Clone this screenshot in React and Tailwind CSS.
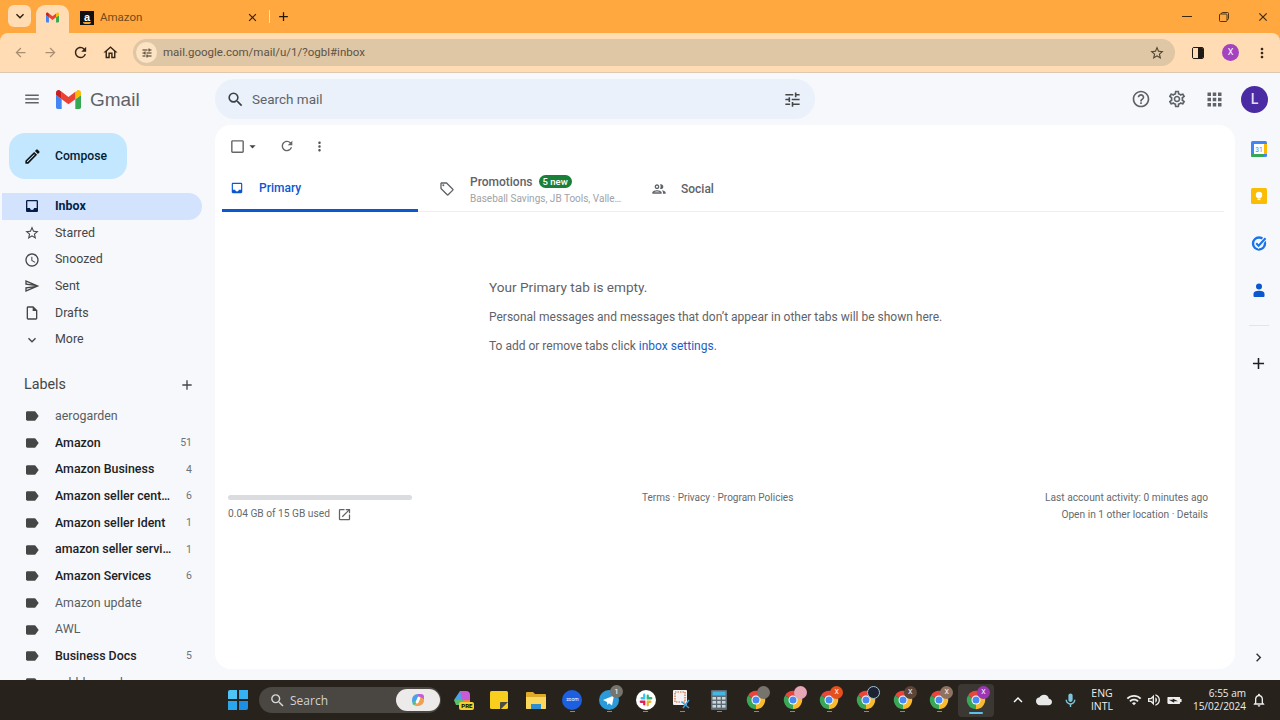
import React from 'react';
import {
  MdMenu, MdSearch, MdTune, MdHelpOutline, MdOutlineSettings, MdApps, MdOutlineEdit, MdInbox,
  MdStarBorder, MdAccessTime, MdOutlineSend, MdOutlineInsertDriveFile, MdExpandMore, MdAdd, MdLabel,
  MdCheckBoxOutlineBlank, MdArrowDropDown, MdRefresh, MdMoreVert, MdOutlineLocalOffer, MdOutlineGroup,
  MdOpenInNew, MdChevronRight, MdArrowBack, MdArrowForward, MdOutlineHome, MdClose, MdKeyboardArrowDown,
  MdKeyboardArrowUp, MdOutlineMic, MdWifi, MdOutlineNotifications, MdCloud, MdOutlineVolumeUp,
  MdBatteryChargingFull,
} from 'react-icons/md';

function GmailM({ className }) {
  return (
    <svg viewBox="0 0 24 24" className={className}>
      <path fill="#4285f4" d="M1.636 21h3.818v-9.273L0 7.636v11.727C0 20.268.732 21 1.636 21z" />
      <path fill="#34a853" d="M18.545 21h3.819c.904 0 1.636-.732 1.636-1.636V7.636l-5.455 4.091V21z" />
      <path fill="#fbbc04" d="M18.545 4.636v7.09L24 7.637V5.455c0-2.023-2.309-3.178-3.927-1.964l-1.528 1.145z" />
      <path fill="#ea4335" d="M5.455 11.727V4.636L12 9.545l6.545-4.909v7.09L12 16.636z" />
      <path fill="#c5221f" d="M0 5.455v2.181l5.455 4.091V4.636L3.927 3.491C2.309 2.278 0 3.432 0 5.455z" />
    </svg>
  );
}

function ChromeIcon({ badge, badgeText }) {
  return (
    <span className="relative block w-[20px] h-[20px]">
      <svg viewBox="0 0 24 24" className="w-[20px] h-[20px]">
        <path fill="#e8453c" d="M12 12 2.47 6.5A11 11 0 0 1 21.53 6.5Z" />
        <path fill="#f9bb2d" d="M12 12 21.53 6.5A11 11 0 0 1 12 23Z" />
        <path fill="#3aa757" d="M12 12 12 23A11 11 0 0 1 2.47 6.5Z" />
        <circle cx="12" cy="12" r="5.4" fill="#fff" />
        <circle cx="12" cy="12" r="4.2" fill="#4a8af4" />
      </svg>
      <span className={`absolute -top-[4px] -right-[4px] w-[13px] h-[13px] rounded-full flex items-center justify-center text-[7px] text-white font-['Roboto',sans-serif] ${badge}`}>{badgeText}</span>
    </span>
  );
}

function Dash({ active }) {
  return active ? (
    <span className="absolute bottom-[3px] left-[11px] w-[14px] h-[2px] rounded bg-[#5cc1ef]" />
  ) : (
    <span className="absolute bottom-[5px] left-[16px] w-[5px] h-[1px] bg-[#8b8985]" />
  );
}

function TaskSlot({ children, dash, active }) {
  return (
    <div className={`relative w-[36.7px] h-[33px] flex items-center justify-center rounded ${active ? 'bg-[#3b3834]' : ''}`}>
      {children}
      {dash && <Dash active={active} />}
    </div>
  );
}

const navItems = [
  { label: 'Inbox', Icon: MdInbox, active: true },
  { label: 'Starred', Icon: MdStarBorder },
  { label: 'Snoozed', Icon: MdAccessTime },
  { label: 'Sent', Icon: MdOutlineSend },
  { label: 'Drafts', Icon: MdOutlineInsertDriveFile },
  { label: 'More', Icon: MdExpandMore },
];

const labels = [
  ['aerogarden', '', false],
  ['Amazon', '51', true],
  ['Amazon Business', '4', true],
  ['Amazon seller central', '6', true],
  ['Amazon seller Ident', '1', true],
  ['amazon seller services', '1', true],
  ['Amazon Services', '6', true],
  ['Amazon update', '', false],
  ['AWL', '', false],
  ['Business Docs', '5', true],
  ['cobbler work', '', false],
];

const chromes = [
  ['bg-[#77736d]', '', false],
  ['bg-[#e5a6b5]', '', false],
  ['bg-[#e4501f]', 'X', false],
  ['bg-[#1b2233] border border-[#9fc2dc]', '', false],
  ['bg-[#5c4436]', 'X', false],
  ['bg-[#8d7363]', 'X', false],
  ['bg-[#9c36b5]', 'X', true],
];

export default function App() {
  return (
    <div className="w-[1280px] h-[720px] flex flex-col overflow-hidden bg-[#ffa83f] font-['Roboto',sans-serif]">
      {/* Tab strip */}
      <div className="h-[33px] shrink-0 flex items-end pl-2 text-[#4a3010]">
        <div className="w-[23px] h-[22px] mb-[6px] rounded-md bg-[#ffdcb4] flex items-center justify-center">
          <MdKeyboardArrowDown className="w-4 h-4 text-[#2b1c08]" />
        </div>
        <div className="relative ml-[5px] w-[33px] h-[28px] pb-[3px] rounded-t-[9px] bg-[#ffdcb4] flex items-center justify-center">
          <GmailM className="w-[13px] h-[13px]" />
        </div>
        <div className="ml-[11px] w-[179px] h-[28px] pb-[3px] flex items-center">
          <span className="relative w-[14px] h-[14px] bg-[#111] text-white text-[11px] leading-[12px] font-bold flex items-start justify-center font-['Liberation_Sans',sans-serif]">
            a
            <span className="absolute bottom-[1px] left-[3px] w-[8px] h-[2px] rounded-b-full bg-[#f5a623]" />
          </span>
          <span className="ml-[6px] text-[11.5px] text-[#6f4c1c] w-[142px]">Amazon</span>
          <MdClose className="ml-[4px] w-[13px] h-[13px] text-[#2b1c08]" />
        </div>
        <div className="ml-[10px] mb-[10px] w-px h-[13px] bg-[#ffdcb4]" />
        <MdAdd className="ml-[6px] mb-[9px] w-[15px] h-[15px] text-[#241704]" />
        <div className="ml-auto flex items-center h-[33px]">
          <span className="w-[10px] h-px bg-[#3b2a10]" />
          <svg viewBox="0 0 10 10" className="ml-[27px] w-[10px] h-[10px]" fill="none" stroke="#3b2a10" strokeWidth="0.9">
            <rect x="0.5" y="2" width="7.5" height="7.5" rx="1" />
            <path d="M2.5 2V1.5a1 1 0 0 1 1-1h5a1 1 0 0 1 1 1v5a1 1 0 0 1-1 1H8" />
          </svg>
          <MdClose className="ml-[27px] mr-[10px] w-[14px] h-[14px] text-[#3b2a10]" />
        </div>
      </div>

      {/* Toolbar */}
      <div className="h-[40px] shrink-0 rounded-t-lg bg-[#ffdcb4] border-b border-[#dcc9b3] flex items-center pl-[13px] pr-[10px]">
        <MdArrowBack className="w-[15px] h-[15px] text-[#a98f72]" />
        <MdArrowForward className="ml-[15px] w-[15px] h-[15px] text-[#a98f72]" />
        <MdRefresh className="ml-[14px] w-[17px] h-[17px] text-[#332516]" />
        <MdOutlineHome className="ml-[13px] w-[17px] h-[17px] text-[#332516]" />
        <div className="ml-[14px] flex-1 h-[27px] rounded-full bg-[#dfc6a4] flex items-center pl-[3px] pr-[10px]">
          <span className="w-[21px] h-[21px] rounded-full bg-[#fbe3c4] flex items-center justify-center">
            <MdTune className="w-[12px] h-[12px] text-[#3a2c1c]" />
          </span>
          <span className="ml-[6px] text-[11.5px] text-[#5d5346]">mail.google.com/mail/u/1/?ogbl#inbox</span>
          <MdStarBorder className="ml-auto w-[16px] h-[16px] text-[#4f4334]" />
        </div>
        <div className="ml-[17px] w-[12px] h-[12px] rounded-[2px] border-[1.5px] border-[#1f1a14] overflow-hidden flex">
          <span className="w-1/2 bg-[#ffdcb4]" />
          <span className="w-1/2 bg-[#1f1a14]" />
        </div>
        <div className="ml-[18px] w-[17px] h-[17px] rounded-full bg-[#a542c0] text-white text-[9px] flex items-center justify-center">X</div>
        <MdMoreVert className="ml-[15px] w-[16px] h-[16px] text-[#332516]" />
      </div>

      {/* Gmail */}
      <div className="flex-1 min-h-0 flex flex-col bg-[#f6f8fc]">
        <div className="h-[52px] shrink-0 flex items-center">
          <div className="w-[215px] shrink-0 flex items-center pl-[23px]">
            <MdMenu className="w-[18px] h-[18px] text-[#5f6368]" />
            <GmailM className="ml-[15px] w-[25px] h-[25px]" />
            <span className="ml-[9px] text-[19px] leading-none text-[#5f6368] font-['Liberation_Sans',sans-serif]">Gmail</span>
          </div>
          <div className="w-[600px] h-[40px] rounded-full bg-[#eaf1fb] flex items-center pl-[11px] pr-[13px]">
            <MdSearch className="w-[19px] h-[19px] text-[#3c4043]" />
            <span className="ml-[7px] mt-[1px] text-[13.5px] text-[#5f6368]">Search mail</span>
            <MdTune className="ml-auto w-[19px] h-[19px] text-[#444746]" />
          </div>
          <div className="ml-auto flex items-center pr-[12px]">
            <MdHelpOutline className="w-[20px] h-[20px] text-[#5f6368]" />
            <MdOutlineSettings className="ml-[16px] w-[20px] h-[20px] text-[#5f6368]" />
            <MdApps className="ml-[17px] w-[21px] h-[21px] text-[#5f6368]" />
            <div className="ml-[16px] w-[27px] h-[27px] rounded-full bg-[#4a2ba3] text-[#e6def5] text-[14px] font-medium flex items-center justify-center">L</div>
          </div>
        </div>

        <div className="flex-1 min-h-0 flex">
          {/* Sidebar */}
          <aside className="w-[215px] shrink-0 overflow-hidden pt-[8px]">
            <div className="ml-[9px] w-[118px] h-[46px] rounded-2xl bg-[#c2e7ff] flex items-center pl-[14px] text-[#001d35]">
              <MdOutlineEdit className="w-[19px] h-[19px] text-[#111]" />
              <span className="ml-[13px] text-[12.2px] font-medium">Compose</span>
            </div>
            <nav className="mt-[14px]">
              {navItems.map(({ label, Icon, active }) => (
                <div key={label} className={`ml-[2px] w-[200px] h-[26.67px] rounded-r-full flex items-center pl-[22px] text-[12.4px] ${active ? 'bg-[#d3e3fd] text-[#041e49] font-bold' : 'text-[#444746]'}`}>
                  <Icon className={`w-[16px] h-[16px] ${active ? 'text-[#041e49]' : 'text-[#444746]'}`} />
                  <span className="ml-[15px]">{label}</span>
                </div>
              ))}
            </nav>
            <div className="mt-[19px] h-[26px] flex items-center pl-[24px] pr-[20px] text-[#444746]">
              <span className="text-[14.3px]">Labels</span>
              <MdAdd className="ml-auto w-[16px] h-[16px]" />
            </div>
            <div className="mt-[5px]">
              {labels.map(([name, count, bold]) => (
                <div key={name} className={`h-[26.67px] flex items-center pl-[24px] pr-[23px] text-[12.4px] ${bold ? 'text-[#202124] font-medium' : 'text-[#5a5e62]'}`}>
                  <MdLabel className="w-[16px] h-[16px] text-[#444746] shrink-0" />
                  <span className="ml-[15px] w-[119px] truncate">{name}</span>
                  <span className="ml-auto text-[10.5px] font-normal text-[#6f7377]">{count}</span>
                </div>
              ))}
            </div>
          </aside>

          {/* Main panel */}
          <main className="w-[1020px] h-[544px] shrink-0 rounded-2xl bg-white flex flex-col px-[7px]">
            <div className="h-[42px] shrink-0 flex items-center pl-[7px] text-[#5f6368]">
              <MdCheckBoxOutlineBlank className="w-[17px] h-[17px] text-[#666]" />
              <MdArrowDropDown className="ml-[-1px] w-[15px] h-[15px] text-[#444]" />
              <MdRefresh className="ml-[19px] w-[16px] h-[16px] text-[#666]" />
              <MdMoreVert className="ml-[17px] w-[15px] h-[15px] text-[#555]" />
            </div>
            <div className="h-[45px] shrink-0 w-[1002px] flex border-b border-[#eeeeee]">
              <div className="w-[196px] h-[45px] border-b-[3px] border-[#0b57d0] flex items-center pl-[8px] text-[#0b57d0]">
                <MdInbox className="w-[14px] h-[14px]" />
                <span className="ml-[15px] text-[12px] font-medium">Primary</span>
              </div>
              <div className="w-[222px] flex items-center pl-[21px]">
                <MdOutlineLocalOffer className="w-[16px] h-[16px] text-[#5f6368]" />
                <div className="ml-[15px]">
                  <div className="flex items-center h-[16px]">
                    <span className="text-[12px] font-medium text-[#5f6368]">Promotions</span>
                    <span className="ml-[6px] h-[13px] px-[4px] rounded-full bg-[#188038] text-white text-[9.5px] font-medium leading-[13px]">5 new</span>
                  </div>
                  <div className="text-[10px] leading-[13px] mt-[2px] text-[#a0a3a7] whitespace-nowrap">Baseball Savings, JB Tools, Valle…</div>
                </div>
              </div>
              <div className="flex items-center pl-[11px] text-[#5f6368]">
                <MdOutlineGroup className="w-[16px] h-[16px]" />
                <span className="ml-[14px] text-[12px] font-medium">Social</span>
              </div>
            </div>
            <div className="pl-[267px] pt-[66px] text-[#5f6368]">
              <div className="text-[13.6px] leading-[18px]">Your Primary tab is empty.</div>
              <div className="mt-[14px] text-[12px] leading-[15px]">Personal messages and messages that don’t appear in other tabs will be shown here.</div>
              <div className="mt-[14px] text-[12px] leading-[15px]">To add or remove tabs click <span className="text-[#1a5fc8]">inbox settings</span><span>.</span></div>
            </div>
            <div className="mt-[141px] flex pl-[6px] pr-[20px] text-[10.2px] text-[#666a6e]">
              <div className="w-[184px]">
                <div className="h-[5px] rounded-full bg-[#dadce0]" />
                <div className="mt-[6px] flex items-center h-[16px]">
                  <span>0.04 GB of 15 GB used</span>
                  <MdOpenInNew className="ml-[7px] w-[15px] h-[15px] text-[#5f6368]" />
                </div>
              </div>
              <div className="ml-[230px] text-[10px] leading-[14px] -mt-[4px]">Terms · Privacy · Program Policies</div>
              <div className="ml-auto text-right leading-[16.5px] -mt-[5px]">
                <div>Last account activity: 0 minutes ago</div>
                <div>Open in 1 other location · Details</div>
              </div>
            </div>
          </main>

          {/* Side rail */}
          <div className="flex-1 flex flex-col items-center pl-[2px] pt-[16px] pb-[4px]">
            <svg viewBox="0 0 16 16" className="w-[16px] h-[16px] shrink-0">
              <rect width="16" height="16" rx="1.5" fill="#4285f4" />
              <rect x="3" y="3" width="10" height="10" fill="#fff" />
              <path d="M13 3h3v10h-3z" fill="#fbbc04" />
              <path d="M0 13h13v3H1.5A1.5 1.5 0 0 1 0 14.5z" fill="#34a853" />
              <text x="8" y="11" textAnchor="middle" fontSize="6.5" fill="#4285f4" fontFamily="Roboto, sans-serif">31</text>
            </svg>
            <svg viewBox="0 0 16 16" className="mt-[31px] w-[16px] h-[16px] shrink-0">
              <rect width="16" height="16" rx="1.5" fill="#fbbc04" />
              <circle cx="8" cy="7" r="3.2" fill="#fff" />
              <rect x="6.5" y="10.5" width="3" height="1.6" fill="#fff" />
            </svg>
            <svg viewBox="0 0 16 16" className="mt-[31px] w-[16px] h-[16px] shrink-0" fill="none">
              <circle cx="8" cy="8.5" r="6" stroke="#1a73e8" strokeWidth="2.4" />
              <path d="M5 8.5l2.5 2.5L14.5 3" stroke="#f6f8fc" strokeWidth="4" />
              <path d="M5.2 8.3l2.4 2.4L14.5 3.2" stroke="#1a73e8" strokeWidth="2" />
            </svg>
            <svg viewBox="0 0 16 16" className="mt-[31px] w-[16px] h-[16px] shrink-0" fill="#0b57d0">
              <circle cx="8" cy="4.5" r="3" />
              <path d="M2.5 14v-2.2c0-1.8 2-3 5.5-3s5.5 1.2 5.5 3V14a1 1 0 0 1-1 1h-9a1 1 0 0 1-1-1z" />
            </svg>
            <div className="mt-[27px] w-[20px] h-px bg-[#e3e5e9]" />
            <MdAdd className="mt-[28px] w-[19px] h-[19px] text-[#1f1f1f]" />
            <MdChevronRight className="mt-auto mb-[10px] w-[17px] h-[17px] text-[#333]" />
          </div>
        </div>
      </div>

      {/* Taskbar */}
      <div className="h-[40px] shrink-0 bg-[#27231c] flex items-center text-[#eeeeee]">
        <div className="ml-[228px] w-[20px] h-[20px] grid grid-cols-2 gap-[1.5px]">
          <span className="bg-[#4ec5f5] rounded-tl-[2px]" />
          <span className="bg-[#36b2f2]" />
          <span className="bg-[#2aa6ee]" />
          <span className="bg-[#1c90e4] rounded-br-[2px]" />
        </div>
        <div className="ml-[11px] w-[182px] h-[26px] rounded-full bg-[#4a4641] flex items-center pl-[10px] pr-[1px]">
          <MdSearch className="w-[17px] h-[17px] text-[#d8d8d8]" />
          <span className="ml-[4px] mt-[1px] text-[12px] text-[#d2d2d2] font-['Open_Sans',sans-serif]">Search</span>
          <span className="ml-auto w-[44px] h-[22px] rounded-full bg-[#ecebe9] flex items-center justify-center">
            <svg viewBox="0 0 16 16" className="w-[16px] h-[16px]">
              <path d="M2 9a6 6 0 0 1 6-7l3 1-6 9-2 1z" fill="#4aa3e8" />
              <path d="M8 2h3a3 3 0 0 1 3 3v2l-5 1z" fill="#c95bd6" />
              <path d="M14 7a6 6 0 0 1-6 7H5l5-9z" fill="#f0a04e" />
              <path d="M2 9l3 5 2-5z" fill="#5cc06a" />
              <rect x="6.6" y="4.5" width="2.8" height="7" rx="1.2" fill="#fff" transform="rotate(25 8 8)" />
            </svg>
          </span>
        </div>
        <div className="ml-[3px] flex items-center">
          <TaskSlot>
            <span className="relative block w-[20px] h-[20px]">
              <svg viewBox="0 0 20 20" className="w-[20px] h-[20px]">
                <path d="M2 10 8 1h6l-3 11H4z" fill="#4aa3e8" />
                <path d="M8 1h6a4 4 0 0 1 4 4v5l-7 2z" fill="#c95bd6" />
                <path d="M18 10v3H8l3-3z" fill="#f0844e" />
                <path d="M2 10l2 5h6l1-5z" fill="#5cc06a" />
              </svg>
              <span className="absolute bottom-0 right-[-2px] w-[15px] h-[8px] rounded-[2px] bg-[#f5cf2e] text-[6px] leading-[8px] font-bold text-black text-center">PRE</span>
            </span>
          </TaskSlot>
          <TaskSlot>
            <svg viewBox="0 0 18 18" className="w-[18px] h-[18px]">
              <rect width="18" height="18" rx="1.5" fill="#f8cf1f" />
              <path d="M10 18v-6a1 1 0 0 1 1-1h7l-7 7z" fill="#4b4a44" />
            </svg>
          </TaskSlot>
          <TaskSlot>
            <svg viewBox="0 0 20 18" className="w-[20px] h-[18px]">
              <path d="M0 2a1 1 0 0 1 1-1h6l2 2h10a1 1 0 0 1 1 1v13a1 1 0 0 1-1 1H1a1 1 0 0 1-1-1z" fill="#e0a92a" />
              <path d="M0 6h20v11a1 1 0 0 1-1 1H1a1 1 0 0 1-1-1z" fill="#fbd75b" />
              <rect x="5" y="13" width="10" height="5" fill="#2f8ecf" />
            </svg>
          </TaskSlot>
          <TaskSlot dash>
            <span className="w-[20px] h-[20px] rounded-full bg-[#1c5fe0] text-white text-[5px] flex items-center justify-center">zoom</span>
          </TaskSlot>
          <TaskSlot dash>
            <span className="relative block w-[20px] h-[20px]">
              <svg viewBox="0 0 20 20" className="w-[20px] h-[20px]">
                <circle cx="10" cy="10" r="10" fill="#2a9ad8" />
                <path d="M4 10l11-4.5-2 10-3-2.2-1.6 1.6-.4-3z" fill="#fff" />
              </svg>
              <span className="absolute -top-[5px] -right-[4px] w-[13px] h-[13px] rounded-full bg-[#77736d] text-[8px] text-white flex items-center justify-center">1</span>
            </span>
          </TaskSlot>
          <TaskSlot dash>
            <span className="w-[20px] h-[20px] rounded-full bg-white flex items-center justify-center">
              <svg viewBox="0 0 16 16" className="w-[14px] h-[14px]" strokeWidth="2.6" strokeLinecap="round" fill="none">
                <path d="M6 2v4H3" stroke="#36c5f0" />
                <path d="M14 6h-4V3" stroke="#2eb67d" />
                <path d="M10 14v-4h3" stroke="#ecb22e" />
                <path d="M2 10h4v3" stroke="#e01e5a" />
              </svg>
            </span>
          </TaskSlot>
          <TaskSlot dash>
            <svg viewBox="0 0 20 20" className="w-[20px] h-[20px]">
              <rect x="1" y="0" width="14" height="15" rx="1" fill="#f2f2f2" />
              <rect x="3" y="2" width="10" height="10" fill="none" stroke="#d2603f" strokeWidth="1.2" strokeDasharray="1.5 1" />
              <path d="M10 12l7 6M17 10l-6 8" stroke="#3aa0d8" strokeWidth="1.4" />
            </svg>
          </TaskSlot>
          <TaskSlot dash>
            <svg viewBox="0 0 16 20" className="w-[16px] h-[20px]">
              <rect width="16" height="20" rx="1" fill="#5d6b75" />
              <rect x="1.5" y="1.5" width="13" height="4" fill="#45b5e6" />
              <g fill="#cfd5d9">
                <rect x="1.5" y="7" width="3.5" height="2.6" /><rect x="6.2" y="7" width="3.5" height="2.6" /><rect x="11" y="7" width="3.5" height="2.6" />
                <rect x="1.5" y="11" width="3.5" height="2.6" /><rect x="6.2" y="11" width="3.5" height="2.6" /><rect x="11" y="11" width="3.5" height="2.6" />
                <rect x="1.5" y="15" width="3.5" height="2.6" /><rect x="6.2" y="15" width="3.5" height="2.6" /><rect x="11" y="15" width="3.5" height="2.6" />
              </g>
            </svg>
          </TaskSlot>
          {chromes.map(([badge, text, active], i) => (
            <TaskSlot key={i} dash active={active}>
              <ChromeIcon badge={badge} badgeText={text} />
            </TaskSlot>
          ))}
        </div>
        <div className="ml-auto flex items-center pr-[13px]">
          <MdKeyboardArrowUp className="w-[18px] h-[18px] text-white" />
          <MdCloud className="ml-[9px] w-[16px] h-[16px] text-[#e8e8e8]" />
          <MdOutlineMic className="ml-[10px] w-[17px] h-[17px] text-[#7cc5dd]" />
          <div className="ml-[8px] w-[30px] text-center text-[10.5px] leading-[13px] font-['Open_Sans',sans-serif]">ENG<br />INTL</div>
          <MdWifi className="ml-[9px] w-[16px] h-[16px]" />
          <MdOutlineVolumeUp className="ml-[4px] w-[16px] h-[16px]" />
          <MdBatteryChargingFull className="ml-[4px] w-[17px] h-[17px] rotate-90" />
          <div className="ml-[8px] w-[55px] text-right text-[10px] leading-[13px] font-['Open_Sans',sans-serif] whitespace-nowrap">6:55 am<br />15/02/2024</div>
          <MdOutlineNotifications className="ml-[5px] w-[16px] h-[16px]" />
        </div>
      </div>
    </div>
  );
}
